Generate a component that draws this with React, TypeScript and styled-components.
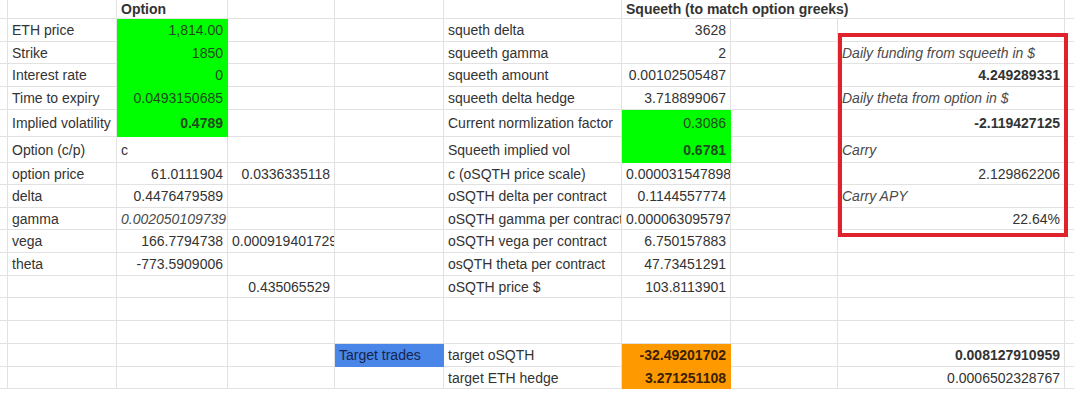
import styled, { createGlobalStyle } from "styled-components";

type Fill = "green" | "blue" | "orange";

interface CellSpec {
  t: string;
  align?: "l" | "r";
  bold?: boolean;
  italic?: boolean;
  fill?: Fill;
  clip?: boolean;
  span?: number;
}

interface RowSpec {
  h: number;
  cells: Partial<Record<"A" | "B" | "C" | "D" | "E" | "F" | "G" | "H", CellSpec>>;
}

const COLS = ["A", "B", "C", "D", "E", "F", "G", "H"] as const;

const fills: Record<Fill, { bg: string; fg: string }> = {
  green: { bg: "#00ff00", fg: "#1f4a1f" },
  blue: { bg: "#4a86e8", fg: "#14244f" },
  orange: { bg: "#ff9900", fg: "#3a2200" },
};

const rows: RowSpec[] = [
  {
    h: 19,
    cells: {
      B: { t: "Option", bold: true, align: "l" },
      F: { t: "Squeeth (to match option greeks)", bold: true, align: "l", span: 3 },
    },
  },
  {
    h: 23,
    cells: {
      A: { t: "ETH price" },
      B: { t: "1,814.00", fill: "green" },
      E: { t: "squeth delta" },
      F: { t: "3628" },
    },
  },
  {
    h: 22,
    cells: {
      A: { t: "Strike" },
      B: { t: "1850", fill: "green" },
      E: { t: "squeeth gamma" },
      F: { t: "2" },
      H: { t: "Daily funding from squeeth in $", italic: true },
    },
  },
  {
    h: 23,
    cells: {
      A: { t: "Interest rate" },
      B: { t: "0", fill: "green" },
      E: { t: "squeeth amount" },
      F: { t: "0.00102505487" },
      H: { t: "4.249289331", bold: true },
    },
  },
  {
    h: 23,
    cells: {
      A: { t: "Time to expiry" },
      B: { t: "0.0493150685", fill: "green" },
      E: { t: "squeeth delta hedge" },
      F: { t: "3.718899067" },
      H: { t: "Daily theta from option in $", italic: true },
    },
  },
  {
    h: 27,
    cells: {
      A: { t: "Implied volatility" },
      B: { t: "0.4789", fill: "green", bold: true },
      E: { t: "Current normlization factor" },
      F: { t: "0.3086", fill: "green" },
      H: { t: "-2.119427125", bold: true },
    },
  },
  {
    h: 26,
    cells: {
      A: { t: "Option (c/p)" },
      B: { t: "c", align: "l" },
      E: { t: "Squeeth implied vol" },
      F: { t: "0.6781", fill: "green", bold: true },
      H: { t: "Carry", italic: true },
    },
  },
  {
    h: 22,
    cells: {
      A: { t: "option price" },
      B: { t: "61.0111904" },
      C: { t: "0.0336335118" },
      E: { t: "c (oSQTH price scale)" },
      F: { t: "0.0000315478980", clip: true },
      H: { t: "2.129862206" },
    },
  },
  {
    h: 23,
    cells: {
      A: { t: "delta" },
      B: { t: "0.4476479589" },
      E: { t: "oSQTH delta per contract" },
      F: { t: "0.1144557774" },
      H: { t: "Carry APY", italic: true },
    },
  },
  {
    h: 22,
    cells: {
      A: { t: "gamma" },
      B: { t: "0.002050109739", italic: true, clip: true },
      E: { t: "oSQTH gamma per contract", clip: true },
      F: { t: "0.0000630957971", clip: true },
      H: { t: "22.64%" },
    },
  },
  {
    h: 23,
    cells: {
      A: { t: "vega" },
      B: { t: "166.7794738" },
      C: { t: "0.000919401729", clip: true },
      E: { t: "oSQTH vega per contract" },
      F: { t: "6.750157883" },
    },
  },
  {
    h: 23,
    cells: {
      A: { t: "theta" },
      B: { t: "-773.5909006" },
      E: { t: "osQTH theta per contract" },
      F: { t: "47.73451291" },
    },
  },
  {
    h: 22,
    cells: {
      C: { t: "0.435065529" },
      E: { t: "oSQTH price $" },
      F: { t: "103.8113901" },
    },
  },
  { h: 23, cells: {} },
  { h: 23, cells: {} },
  {
    h: 23,
    cells: {
      D: { t: "Target trades", fill: "blue", align: "l" },
      E: { t: "target oSQTH" },
      F: { t: "-32.49201702", fill: "orange", bold: true },
      H: { t: "0.008127910959", bold: true },
    },
  },
  {
    h: 22,
    cells: {
      E: { t: "target ETH hedge" },
      F: { t: "3.271251108", fill: "orange", bold: true },
      H: { t: "0.0006502328767" },
    },
  },
];

const isNumber = (t: string) => /^-?[\d.,%]+$/.test(t);

export default function App() {
  return (
    <>
      <GlobalStyle />
      <Sheet>
        {rows.map((row, ri) => {
          const out: React.ReactNode[] = [<Stub key="stub" />];
          let skip = 0;
          COLS.forEach((col) => {
            if (skip > 0) {
              skip--;
              return;
            }
            const c = row.cells[col];
            if (!c) {
              out.push(<Cell key={col} />);
              return;
            }
            const span = c.span ?? 1;
            skip = span - 1;
            const align = c.clip ? "l" : c.align ?? (isNumber(c.t) ? "r" : "l");
            out.push(
              <Cell
                key={col}
                $span={span}
                $align={align}
                $bold={c.bold}
                $italic={c.italic}
                $fill={c.fill}
              >
                {c.t}
              </Cell>
            );
          });
          out.push(<Stub key="trail" />);
          return (
            <Row key={ri} $h={row.h}>
              {out}
            </Row>
          );
        })}
        <Highlight />
      </Sheet>
    </>
  );
}

const GlobalStyle = createGlobalStyle`
  html, body {
    margin: 0;
    padding: 0;
    background: #ffffff;
    overflow: hidden;
  }
  body {
    font-family: "Liberation Sans", Arial, sans-serif;
  }
`;

const Sheet = styled.div`
  position: relative;
  width: 1074px;
  height: 405px;
  background: #ffffff;
`;

const Row = styled.div<{ $h: number }>`
  display: grid;
  grid-template-columns: 8px 109px 111px 107px 109px 178px 109px 107px 227px 9px;
  height: ${(p) => p.$h}px;
`;

const Stub = styled.div`
  border-bottom: 1px solid #e2e2e2;
  &:first-child {
    border-right: 1px solid #e2e2e2;
  }
`;

const Cell = styled.div<{
  $span?: number;
  $align?: "l" | "r";
  $bold?: boolean;
  $italic?: boolean;
  $fill?: Fill;
}>`
  grid-column: span ${(p) => p.$span ?? 1};
  box-sizing: border-box;
  display: flex;
  align-items: center;
  justify-content: ${(p) => (p.$align === "r" ? "flex-end" : "flex-start")};
  padding: 0 4px;
  overflow: hidden;
  white-space: nowrap;
  font-size: 14px;
  font-weight: ${(p) => (p.$bold ? 700 : 400)};
  font-style: ${(p) => (p.$italic ? "italic" : "normal")};
  color: ${(p) => (p.$fill ? fills[p.$fill].fg : p.$italic ? "#4a4a4a" : "#333333")};
  background: ${(p) => (p.$fill ? fills[p.$fill].bg : "transparent")};
  border-right: 1px solid ${(p) => (p.$fill ? fills[p.$fill].bg : "#e2e2e2")};
  border-bottom: 1px solid ${(p) => (p.$fill ? fills[p.$fill].bg : "#e2e2e2")};
`;

const Highlight = styled.div`
  position: absolute;
  left: 838px;
  top: 33px;
  width: 230px;
  height: 204px;
  box-sizing: border-box;
  border: 4px solid #e0222d;
  pointer-events: none;
`;
